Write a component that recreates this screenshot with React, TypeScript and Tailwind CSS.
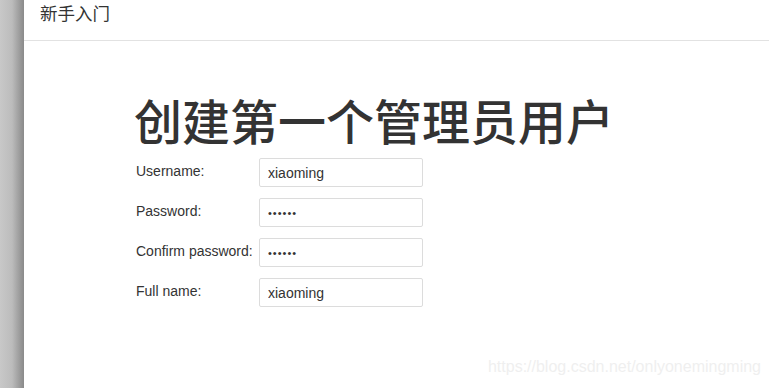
const fields = [
  { label: "Username:", value: "xiaoming", secret: false },
  { label: "Password:", value: "••••••", secret: true },
  { label: "Confirm password:", value: "••••••", secret: true },
  { label: "Full name:", value: "xiaoming", secret: false },
];

export default function App() {
  return (
    <div
      className="flex h-[388px] w-[769px] overflow-hidden bg-white text-[#333]"
      style={{ fontFamily: '"Liberation Sans", "Noto Sans CJK SC", sans-serif' }}
    >
      {/* left window strip */}
      <div className="w-[24px] shrink-0 bg-gradient-to-r from-[#c8c8c8] via-[#bcbcbc] to-[#8a8a8a]" />

      <div className="flex flex-1 flex-col">
        {/* header */}
        <div className="flex h-[41px] items-center border-b border-[#e2e2e2] pl-[16px] pb-[12px] text-[17.5px] text-[#333]">
          新手入门
        </div>

        <div className="relative flex-1 pl-[110px] pt-[55px]">
          <h1 className="text-[48px] font-medium leading-[56px] text-[#333]">创建第一个管理员用户</h1>

          <div className="mt-[6px] flex flex-col gap-[11px] pl-[2px]">
            {fields.map((f) => (
              <div key={f.label} className="flex items-start">
                <label className="w-[123px] pt-[3px] text-[14px] text-[#333]">{f.label}</label>
                {f.secret ? (
                  <input
                    type="text"
                    readOnly
                    value={f.value}
                    className="h-[29px] w-[164px] rounded-[2px] border border-[#dcdcdc] px-[8px] text-[11px] tracking-[1px] text-[#333] outline-none"
                  />
                ) : (
                  <input
                    type="text"
                    readOnly
                    value={f.value}
                    className="h-[29px] w-[164px] rounded-[2px] border border-[#dcdcdc] px-[8px] text-[14px] text-[#333] outline-none"
                  />
                )}
              </div>
            ))}
          </div>

          <div className="absolute bottom-[9px] right-[8px] text-[16px] text-[#efefef]">
            https://blog.csdn.net/onlyonemingming
          </div>
        </div>
      </div>
    </div>
  );
}
